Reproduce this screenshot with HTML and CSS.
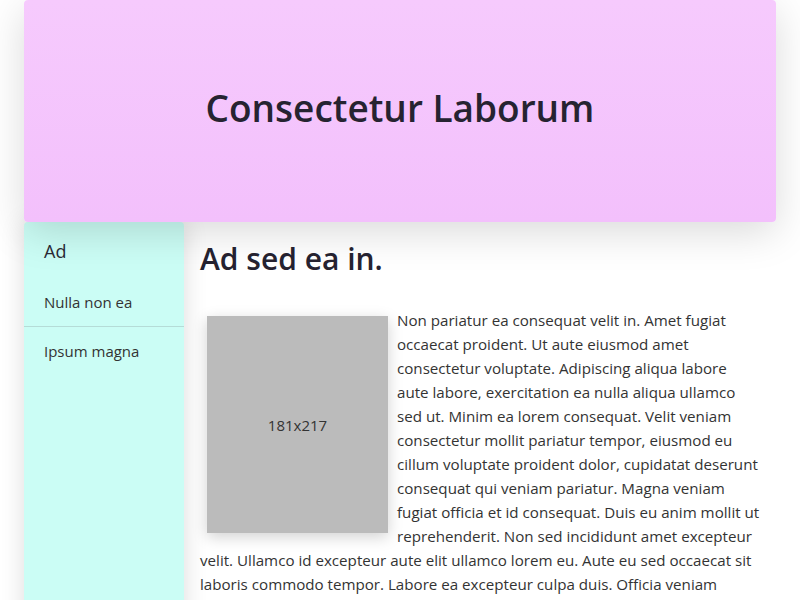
FILE: index.html
```html
<!DOCTYPE html>
<html>
<head>
<meta charset="utf-8">
<link rel="stylesheet" href="styles.css">
</head>
<body>
<div class="page">
  <header class="hero">
    <h1 class="hero-title">Consectetur Laborum</h1>
  </header>
  <div class="layout">
    <aside class="sidebar">
      <div class="side-title">Ad</div>
      <ul class="side-list">
        <li class="side-item side-item-sep">Nulla non ea</li>
        <li class="side-item">Ipsum magna</li>
      </ul>
    </aside>
    <main class="content">
      <h2 class="content-title">Ad sed ea in.</h2>
      <div class="article">
        <div class="placeholder">181x217</div>
        <p class="content-text">Non pariatur ea consequat velit in. Amet fugiat occaecat proident. Ut aute eiusmod amet consectetur voluptate. Adipiscing aliqua labore aute labore, exercitation ea nulla aliqua ullamco sed ut. Minim ea lorem consequat. Velit veniam consectetur mollit pariatur tempor, eiusmod eu cillum voluptate proident dolor, cupidatat deserunt consequat qui veniam pariatur. Magna veniam fugiat officia et id consequat. Duis eu anim mollit ut reprehenderit. Non sed incididunt amet excepteur velit. Ullamco id excepteur aute elit ullamco lorem eu. Aute eu sed occaecat sit laboris commodo tempor. Labore ea excepteur culpa duis. Officia veniam adipiscing nulla in labore. Consequat deserunt aute sunt culpa. Velit minim sit pariatur.</p>
      </div>
    </main>
  </div>
</div>
</body>
</html>
```

FILE: styles.css
```css
html, body {
  margin: 0;
  padding: 0;
  background: #ffffff;
}
body {
  font-family: "Open Sans", "Noto Sans", sans-serif;
  font-size: 16px;
  line-height: 24px;
  color: #333333;
  overflow: hidden;
  height: 600px;
}
.page {
  width: 752px;
  margin: 0 auto;
}
.hero {
  position: relative;
  z-index: 2;
  height: 222px;
  box-sizing: border-box;
  padding-bottom: 6px;
  border-radius: 4px;
  background: linear-gradient(180deg, #f6cafd 0%, #f3c0fc 100%);
  box-shadow: 0 10px 40px rgba(0, 0, 0, 0.15);
  display: flex;
  align-items: center;
  justify-content: center;
}
.hero-title {
  margin: 0;
  font-size: 37px;
  line-height: 44px;
  font-weight: 600;
  color: #262331;
}
.layout {
  display: flex;
  align-items: stretch;
  min-height: 378px;
}
.sidebar {
  position: relative;
  z-index: 1;
  flex: 0 0 160px;
  background: #cbfdf5;
  box-shadow: 0 0 24px rgba(0, 0, 0, 0.14);
  border-radius: 4px 4px 0 0;
}
.side-title {
  padding: 17px 20px 15px;
  font-size: 18px;
  color: #2a2a35;
}
.side-list {
  list-style: none;
  margin: 0;
  padding: 0;
}
.side-item {
  padding: 12px 20px;
  font-size: 15px;
  color: #333333;
}
.side-item-sep {
  border-bottom: 1px solid #b5dcd7;
}
.content {
  flex: 1;
  padding: 0 16px;
}
.content-title {
  margin: 19px 0 31px;
  font-size: 30px;
  line-height: 36px;
  font-weight: 600;
  color: #262331;
}
.article {
  font-size: 15.15px;
}
.content-text {
  margin: 0;
}
.placeholder {
  float: left;
  width: 181px;
  height: 217px;
  margin: 8px 9px 8px 7px;
  background: #bbbbbb;
  color: #333333;
  font-size: 15px;
  display: flex;
  align-items: center;
  justify-content: center;
  box-shadow: 0 4px 14px rgba(0, 0, 0, 0.18);
}
```
